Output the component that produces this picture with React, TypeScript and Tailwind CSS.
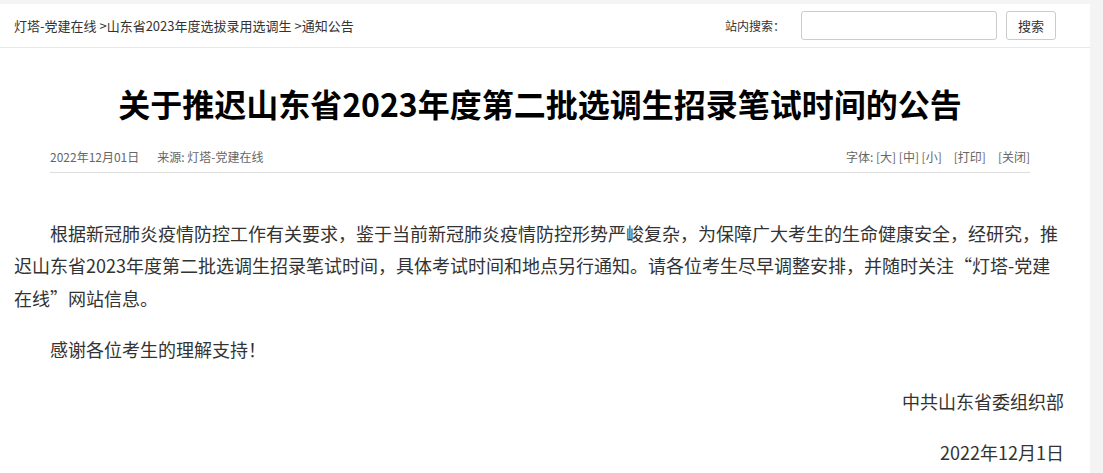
import React from "react";

const font = { fontFamily: '"Noto Sans CJK SC", "Noto Sans", sans-serif' };

export default function App() {
  return (
    <div className="min-h-[473px] bg-[#f4f4f4] pt-[4px]" style={font}>
      <div className="w-[1090px] bg-white pb-[20px]">
        {/* header */}
        <div className="flex h-[44px] items-center justify-between border-b border-[#e8e8e8] pl-[14px] pr-[34px]">
          <div className="text-[13px] leading-[20px] text-[#333]">
            <span>灯塔-党建在线</span>
            <span> &gt;山东省2023年度选拔录用选调生</span>
            <span> &gt;通知公告</span>
          </div>
          <div className="flex items-center">
            <span className="mr-[16px] text-[12px] text-[#333]">站内搜索：</span>
            <div className="h-[29px] w-[196px] rounded-[3px] border border-[#cccccc] bg-white" />
            <button className="ml-[9px] h-[29px] w-[50px] rounded-[3px] border border-[#cccccc] bg-white text-[13px] text-[#333]">
              搜索
            </button>
          </div>
        </div>

        {/* title + meta */}
        <div className="ml-[50px] w-[980px]">
          <h1 className="pt-[31px] text-center text-[32px] font-bold leading-[48px] text-black">
            关于推迟山东省2023年度第二批选调生招录笔试时间的公告
          </h1>
          <div className="mt-[21px] flex items-center justify-between border-b border-[#dddddd] pb-[6px] text-[12px] leading-[18px] text-[#666]">
            <div className="flex">
              <span>2022年12月01日</span>
              <span className="ml-[18px]">来源: 灯塔-党建在线</span>
            </div>
            <div className="flex">
              <span>字体: [大] [中] [小]</span>
              <span className="ml-[12px]">[打印]</span>
              <span className="ml-[12px]">[关闭]</span>
            </div>
          </div>
        </div>

        {/* body */}
        <div className="mt-[44px] w-[1064px] pl-[14px] text-[18px] leading-[1.8] text-[#333]">
          <p className="mb-[19px] indent-[2em]">
            根据新冠肺炎疫情防控工作有关要求，鉴于当前新冠肺炎疫情防控形势严峻复杂，为保障广大考生的生命健康安全，经研究，推迟山东省2023年度第二批选调生招录笔试时间，具体考试时间和地点另行通知。请各位考生尽早调整安排，并随时关注“灯塔-党建在线”网站信息。
          </p>
          <p className="mb-[19px] indent-[2em]">感谢各位考生的理解支持！</p>
          <p className="mb-[19px] text-right">中共山东省委组织部</p>
          <p className="mb-[19px] text-right">2022年12月1日</p>
        </div>
      </div>
    </div>
  );
}
